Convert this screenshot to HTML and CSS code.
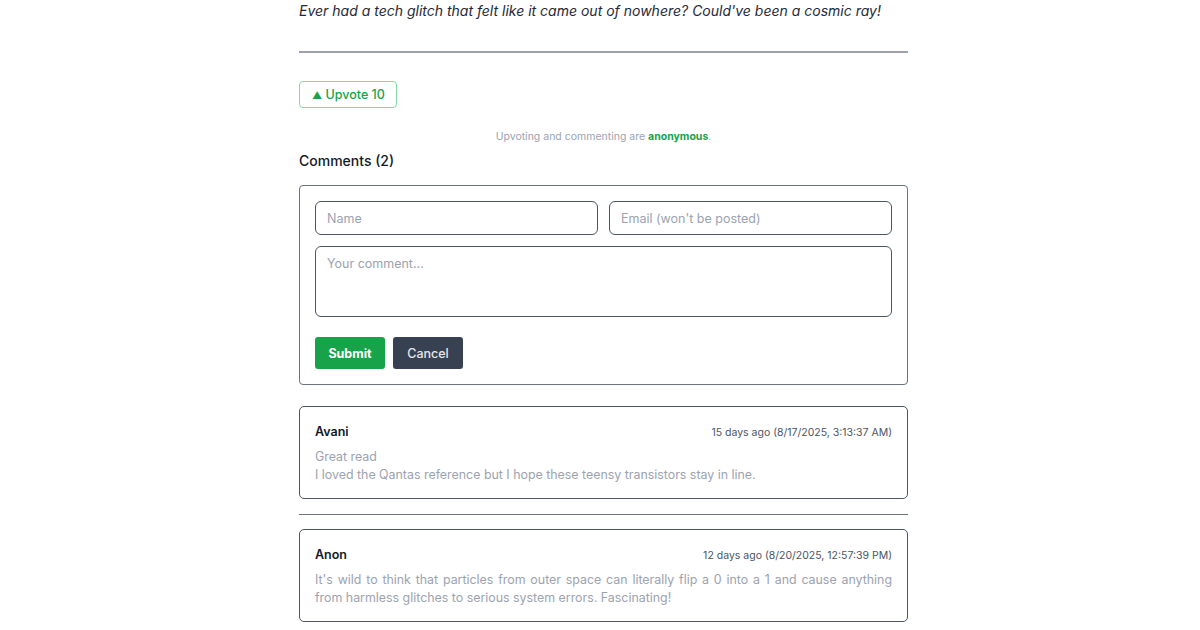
FILE: index.html
```html
<!DOCTYPE html>
<html>
<head>
    <title>Cosmic rays and bit flips</title>
    <link rel="stylesheet" href="styles.css">
</head>
<body>
    <div id="post">
        <p class="post-outro">Ever had a tech glitch that felt like it came out of nowhere? Could've been a cosmic ray!</p>
        <hr class="post-rule">

        <button id="upvote-button"><span class="arrow">&#9650;</span> Upvote 10</button>

        <p class="anon-note">Upvoting and commenting are <strong>anonymous</strong>.</p>

        <h3 class="comments-title">Comments (2)</h3>

        <form id="comment-form">
            <div class="form-row">
                <input type="text" placeholder="Name">
                <input type="email" placeholder="Email (won't be posted)">
            </div>
            <textarea placeholder="Your comment..."></textarea>
            <div class="form-buttons">
                <button type="button" id="submit-button">Submit</button>
                <button type="button" id="cancel-button">Cancel</button>
            </div>
        </form>

        <div class="comment-item">
            <div class="comment-head">
                <span class="comment-author">Avani</span>
                <span class="comment-date">15 days ago (8/17/2025, 3:13:37 AM)</span>
            </div>
            <div class="comment-body">Great read<br>I loved the Qantas reference but I hope these teensy transistors stay in line.</div>
        </div>
        <hr class="comment-rule">
        <div class="comment-item">
            <div class="comment-head">
                <span class="comment-author">Anon</span>
                <span class="comment-date">12 days ago (8/20/2025, 12:57:39 PM)</span>
            </div>
            <div class="comment-body">It's wild to think that particles from outer space can literally flip a 0 into a 1 and cause anything from harmless glitches to serious system errors. Fascinating!</div>
        </div>
    </div>
</body>
</html>
```

FILE: styles.css
```css
/* Post footer + comments */
body {
    margin: 0;
    font-family: 'Inter', 'Noto Sans', sans-serif;
    background-color: #FFFFFF;
    color: #111827;
}

#post {
    width: 609px;
    margin-left: calc(50% - 301px);
}

.post-outro {
    margin: 0;
    font-size: 14px;
    line-height: 22px;
    font-style: italic;
    color: #1F2937;
}

.post-rule {
    margin: 29px 0 0;
    border: none;
    border-top: 2px solid #9CA3AF;
}

#upvote-button {
    margin-top: 28px;
    height: 27px;
    padding: 0 11px 0 12px;
    background-color: #FFFFFF;
    color: #16A34A;
    border: 1px solid #86D9A3;
    border-radius: 4px;
    font-family: 'Inter', sans-serif;
    font-size: 12.5px;
    font-weight: 500;
    cursor: pointer;
}

#upvote-button .arrow {
    font-size: 10px;
}

.anon-note {
    margin: 22px 0 0;
    text-align: center;
    font-size: 10.5px;
    line-height: 14px;
    color: #9CA3AF;
}

.anon-note strong {
    color: #16A34A;
    font-weight: 700;
}

.comments-title {
    margin: 7px 0 0;
    font-size: 14px;
    line-height: 20px;
    font-weight: 500;
    color: #111827;
}

#comment-form {
    margin-top: 14px;
    padding: 15px;
    border: 1px solid #6B7280;
    border-radius: 4px;
}

.form-row {
    display: flex;
    gap: 11px;
}

#comment-form input,
#comment-form textarea {
    box-sizing: border-box;
    padding: 0 11px;
    border: 1px solid #4B5563;
    border-radius: 6px;
    font-family: 'Inter', sans-serif;
    font-size: 12.5px;
    color: #111827;
    background-color: #FFFFFF;
}

#comment-form input {
    flex: 1;
    height: 34px;
}

#comment-form textarea {
    display: block;
    width: 100%;
    height: 71px;
    margin-top: 11px;
    padding-top: 9px;
    resize: none;
}

#comment-form ::placeholder {
    color: #9CA3AF;
}

.form-buttons {
    display: flex;
    gap: 8px;
    margin-top: 20px;
}

.form-buttons button {
    width: 70px;
    height: 32px;
    border: none;
    border-radius: 3px;
    font-family: 'Inter', sans-serif;
    font-size: 12.5px;
    cursor: pointer;
}

#submit-button {
    background-color: #16A34A;
    color: #FFFFFF;
    font-weight: 700;
}

#cancel-button {
    background-color: #374151;
    color: #E5E7EB;
    font-weight: 500;
}

.comment-item {
    margin-top: 21px;
    padding: 16px 15px 14px;
    border: 1.5px solid #4B5563;
    border-radius: 5px;
}

.comment-rule + .comment-item {
    margin-top: 14px;
}

.comment-head {
    display: flex;
    justify-content: space-between;
    align-items: baseline;
    line-height: 18px;
}

.comment-author {
    font-size: 12.5px;
    font-weight: 600;
    color: #111827;
}

.comment-date {
    font-size: 10.5px;
    color: #4B5563;
}

.comment-body {
    margin-top: 6px;
    font-size: 12.4px;
    line-height: 18px;
    color: #9CA3AF;
    text-align: justify;
}

.comment-rule {
    margin: 15px 0 0;
    border: none;
    border-top: 1px solid #6B7280;
}
```
